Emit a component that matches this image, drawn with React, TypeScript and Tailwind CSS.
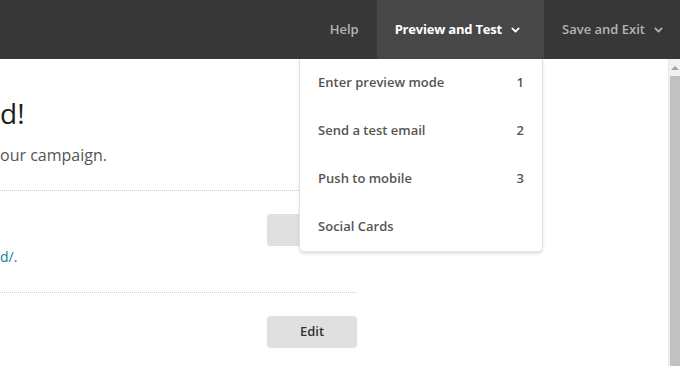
import React from "react";

const Chevron: React.FC<{ className?: string }> = ({ className }) => (
  <svg viewBox="0 0 10 6" className={className} fill="none">
    <path d="M1.5 1.2l3.5 3.5 3.5-3.5" stroke="currentColor" strokeWidth="2" strokeLinecap="round" strokeLinejoin="round" />
  </svg>
);

const menuItems = [
  { label: "Enter preview mode", key: "1" },
  { label: "Send a test email", key: "2" },
  { label: "Push to mobile", key: "3" },
  { label: "Social Cards", key: "" },
];

const PreviewMenu: React.FC = () => (
  <ul className="absolute right-[1px] top-full z-10 w-[244px] rounded-b-[5px] border border-t-0 border-[#e3e3e3] bg-white shadow-[0_2px_3px_rgba(0,0,0,0.12)]">
    {menuItems.map((item) => (
      <li
        key={item.label}
        className="flex h-12 items-center justify-between pl-[18px] pr-[18px] text-[13px] font-semibold text-[#555555]"
      >
        <span>{item.label}</span>
        <span>{item.key}</span>
      </li>
    ))}
  </ul>
);

const Header: React.FC = () => (
  <header className="flex h-[59px] justify-end bg-[#373737] text-[13px] font-semibold">
    <div className="flex items-center px-[18px] text-[#b3b3b3]">Help</div>
    <div className="relative flex items-center bg-[#474747] pl-[18px] pr-[24px] text-white">
      <span className="font-bold tracking-[-0.2px]">Preview and Test</span>
      <Chevron className="ml-[9px] h-[6px] w-[9px]" />
      <PreviewMenu />
    </div>
    <div className="flex items-center pl-[18px] pr-[17px] text-[#b3b3b3]">
      <span>Save and Exit</span>
      <Chevron className="ml-[9px] h-[6px] w-[9px]" />
    </div>
  </header>
);

const Scrollbar: React.FC = () => (
  <div className="flex w-3 flex-col border-l border-[#e8e8e8] bg-[#f1f1f1]">
    <div className="flex h-[17px] items-center justify-center">
      <div className="h-0 w-0 border-x-[4px] border-b-[4px] border-x-transparent border-b-[#a3a3a3]" />
    </div>
    <div className="ml-[1px] flex-1 bg-[#c1c1c1]" />
  </div>
);

export default function App() {
  return (
    <div
      className="flex h-[366px] w-[680px] flex-col overflow-hidden bg-white"
      style={{ fontFamily: '"Open Sans", "Noto Sans", sans-serif' }}
    >
      <Header />
      <div className="flex flex-1">
        <main className="w-[357px]">
          <section className="border-b border-dotted border-[#cfcfcf] pb-[23px] pt-[36px]">
            <h1 className="text-[28px] font-normal leading-[36px] text-[#241c15]">d!</h1>
            <p className="mt-3 text-[16px] leading-6 text-[#555555]">our campaign.</p>
          </section>
          <section className="flex items-start justify-between border-b border-dotted border-[#cfcfcf] pb-[25px] pt-[23px]">
            <p className="mt-[33px] text-[14px] leading-5 text-[#0d7fa0]">d/.</p>
            <button className="h-8 w-[90px] rounded-[3px] bg-[#e0e0e0] text-[13px] font-semibold text-[#333333]">
              Edit
            </button>
          </section>
          <section className="flex justify-end pt-[23px]">
            <button className="h-8 w-[90px] rounded-[3px] bg-[#e0e0e0] text-[13px] font-semibold text-[#333333]">
              Edit
            </button>
          </section>
        </main>
        <div className="flex-1" />
        <Scrollbar />
      </div>
    </div>
  );
}
